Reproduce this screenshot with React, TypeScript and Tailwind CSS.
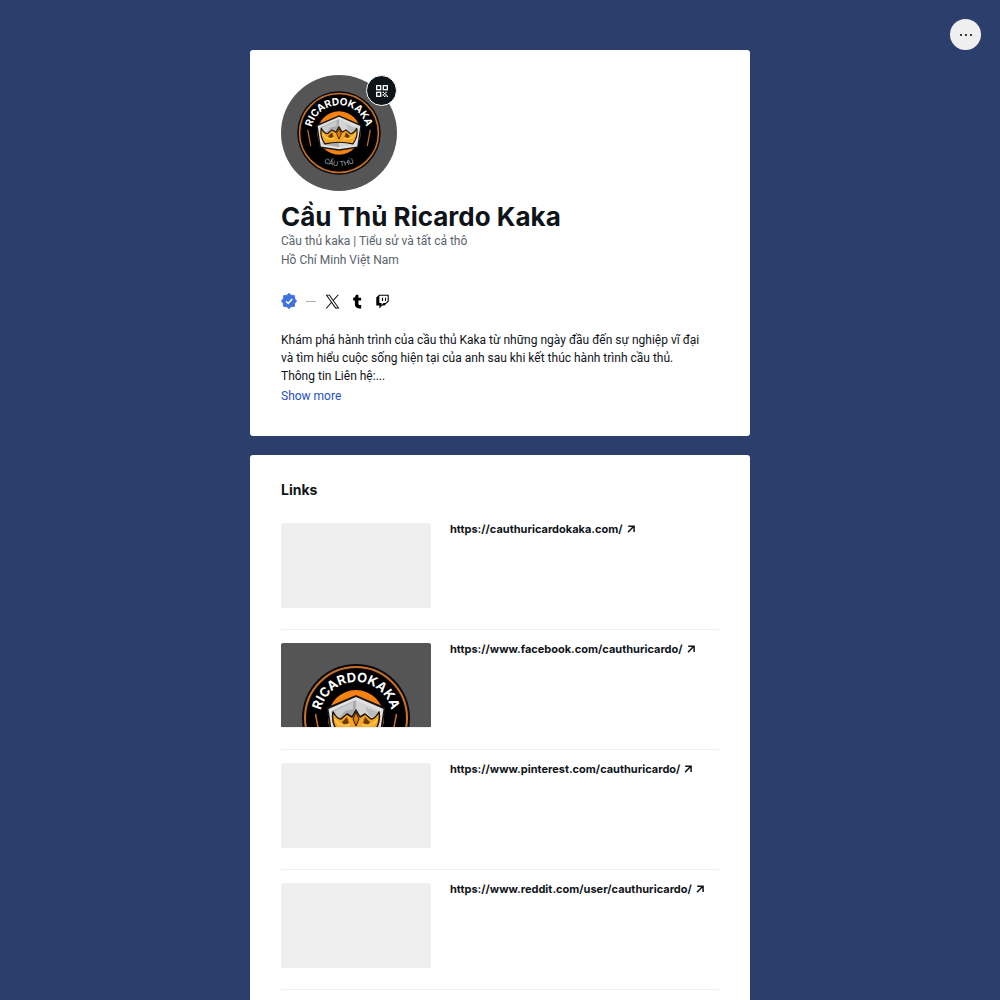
import { useId, useState } from "react";

interface LinkItem {
    url: string;
    hasThumbnail?: boolean;
}

const links: LinkItem[] = [
    { url: "https://cauthuricardokaka.com/" },
    { url: "https://www.facebook.com/cauthuricardo/", hasThumbnail: true },
    { url: "https://www.pinterest.com/cauthuricardo/" },
    { url: "https://www.reddit.com/user/cauthuricardo/" },
];

function TeamLogo({ className, cropped = false }: { className?: string; cropped?: boolean }) {
    const id = useId();

    return (
        <svg
            className={className}
            viewBox={cropped ? "0 0 150 84" : "0 0 150 150"}
            role="img"
            aria-label="Ricardo Kaka logo"
        >
            <rect width="150" height="150" fill="#555555" />
            <circle cx="75" cy="75" r="54" fill="#080808" />
            <circle cx="75" cy="75" r="51" fill="none" stroke="#c9702a" strokeWidth="2" />
            <circle cx="75" cy="75" r="48.5" fill="#000" />
            <circle cx="75" cy="75" r="28" fill="#f8820f" />

            {/* Ring lettering */}
            <path id={`${id}-top`} d="M39.700 82a36 36 0 1 1 70.600 0" fill="none" />
            <text fill="#fff" fontSize="13" fontWeight="700" textAnchor="middle">
                <textPath href={`#${id}-top`} startOffset="50%">RICARDOKAKA</textPath>
            </text>
            {!cropped && (
                <>
                    <path id={`${id}-bottom`} d="M32 75a43 43 0 0 0 86 0" fill="none" />
                    <text fill="#a5adb5" fontSize="9" textAnchor="middle">
                        <textPath href={`#${id}-bottom`} startOffset="50%">CẦU THỦ</textPath>
                    </text>
                </>
            )}
            <path d="M34.500 71 38.500 92M115.500 71 111.500 92" stroke="#c9702a" strokeWidth="1.500" />

            {/* Shield */}
            <path d="M75 52 45.500 64.500 50 94 75 98 100 94 104.500 64.500Z" fill="#161616" />
            <path d="M75 54 47.500 66 51.500 92.500 75 96 98.500 92.500 102.500 66Z" fill="#e2e2e2" />
            <path d="M75 57 50.500 68 54 90 75 93Z" fill="#a9abad" />
            <path d="M75 57 99.500 68 96 90 75 93Z" fill="#d3d4d5" />
            <path d="M72 59 53 68 57 76 64 68 72 66Z" fill="#c9cbcd" />
            <path d="M84 64 97 69 95 77 88 72Z" fill="#babcbe" />

            {/* Crown */}
            <path
                d="M52 69Q56 76 60 76L66 71 71 74 75 67 79 74 84 71 90 76Q94 76 98 69 100 80 93 89 75 85 57 89 50 80 52 69Z"
                fill="#f5a623"
                stroke="#201303"
                strokeWidth="1.500"
                strokeLinejoin="round"
            />
            <path d="M61 79 66 74 68 80 63 82ZM89 79 84 74 82 80 87 82Z" fill="#6b3a08" />
            <path d="M54 76Q57 84 69 82M96 76Q93 84 81 82" fill="none" stroke="#ffc94d" strokeWidth="2" />
            <path d="M75 69 72 76 75 83 78 76Z" fill="#e27c09" stroke="#201303" strokeWidth="1" />
        </svg>
    );
}

function QrIcon() {
    return (
        <svg className="size-3" viewBox="0 0 12 12" fill="none" stroke="currentColor" strokeWidth="1.300">
            <rect x="0.700" y="0.700" width="4" height="4" />
            <rect x="7.300" y="0.700" width="4" height="4" />
            <rect x="0.700" y="7.300" width="4" height="4" />
            <path d="M6.600 7.300h1.400M9.400 7.300h1.300M8 8.700h1.400M6.600 10h1.400M9.400 10h1.300M10.700 11.300h1.300M8 11.300h1.400" />
        </svg>
    );
}

function VerifiedIcon() {
    return (
        <svg className="size-4" viewBox="0 0 16 16">
            <path
                d="M8 0.300 10 2.200 13.400 2.600 13.800 6 15.700 8 13.800 10 13.400 13.400 10 13.800 8 15.700 6 13.800 2.600 13.400 2.200 10 0.300 8 2.200 6 2.600 2.600 6 2.200Z"
                fill="#3f71df"
                stroke="#3f71df"
                strokeWidth="0.800"
                strokeLinejoin="round"
            />
            <path d="m5 8.300 2.200 2.200 4-4.600" fill="none" stroke="#fff" strokeWidth="1.500" />
        </svg>
    );
}

function XIcon() {
    return (
        <svg className="size-[15px]" viewBox="0 0 24 24" fill="currentColor">
            <path d="M14.095 10.316 22.286 1h-1.940L13.230 9.088 7.551 1H1l8.590 12.231L1 23h1.940l7.510-8.543L16.449 23H23l-8.905-12.684Zm-2.658 3.022-.872-1.218L3.640 2.432h2.980l5.590 7.821.869 1.219 7.265 10.166h-2.982l-5.926-8.300Z" />
        </svg>
    );
}

function TumblrIcon() {
    return (
        <svg className="size-[15px]" viewBox="0 0 24 24" fill="currentColor">
            <path d="M14.563 23c-3.800 0-6.780-1.850-6.780-6.480v-5.960H5V6.500c2.970-.750 4.270-3.210 4.410-5.300h4.100v4.800h4.300v4.360h-4.300v5.100c0 1.730.870 2.260 2.200 2.260h2.170V23h-3.317Z" />
        </svg>
    );
}

function TwitchIcon() {
    return (
        <svg className="size-[15px]" viewBox="0 0 24 24" fill="currentColor">
            <path d="M6.500 1 2 5.500v13h5V23l4.500-4.500H15L22 12V1H6.500Zm13.700 10.200-3.200 3.200h-3.500l-3 3v-3H7V2.800h13.200v8.400ZM17.700 6v5h-1.800V6h1.800Zm-4.800 0v5h-1.800V6h1.800Z" />
        </svg>
    );
}

function ArrowIcon() {
    return (
        <svg className="ml-1 inline size-2 align-baseline" viewBox="0 0 8 8" fill="none" stroke="currentColor" strokeWidth="1.500">
            <path d="M1 7.200 6.800 1.200M1.200 1.200h5.900v5.900" />
        </svg>
    );
}

export default function App() {
    const [expanded, setExpanded] = useState(false);

    return (
        <div className="min-h-screen bg-[#2c3e6b] px-4 pt-[50px] pb-[50px] font-[Inter,'Noto_Sans',sans-serif] text-[#0f1419]">
            <button
                type="button"
                aria-label="More options"
                className="fixed top-[19px] right-[19px] flex size-[31px] items-center justify-center gap-[3px] rounded-full bg-[#efefef]"
            >
                <span className="size-[2px] rounded-full bg-black" />
                <span className="size-[2px] rounded-full bg-black" />
                <span className="size-[2px] rounded-full bg-black" />
            </button>

            <main className="mx-auto flex max-w-[500px] flex-col gap-[19px]">
                <section className="rounded-[3px] bg-white px-[31px] pt-[25px] pb-[30px]">
                    <div className="relative w-[116px]">
                        <TeamLogo className="size-[116px] rounded-full" />
                        <button
                            type="button"
                            aria-label="Show QR code"
                            className="absolute top-0 right-0 flex size-[31px] items-center justify-center rounded-full border border-white bg-[#0f1419] text-white"
                        >
                            <QrIcon />
                        </button>
                    </div>

                    <h1 className="mt-[10px] text-[26px] leading-[31px] font-bold">Cầu Thủ Ricardo Kaka</h1>
                    <p className="font-[Roboto,'Noto_Sans',sans-serif] text-[12px] leading-[19px] text-[#59626b]">
                        Cầu thủ kaka | Tiểu sử và tất cả thô
                        <br />
                        Hồ Chí Minh Việt Nam
                    </p>

                    <div className="mt-[23px] flex items-center">
                        <VerifiedIcon />
                        <span className="mx-[9px] h-px w-[10px] bg-[#a9adb1]" />
                        <div className="flex gap-[10px] text-black">
                            <a href="#x" aria-label="X"><XIcon /></a>
                            <a href="#tumblr" aria-label="Tumblr"><TumblrIcon /></a>
                            <a href="#twitch" aria-label="Twitch"><TwitchIcon /></a>
                        </div>
                    </div>

                    <p className="mt-[22px] font-[Roboto,'Noto_Sans',sans-serif] text-[12px] leading-[18px]">
                        Khám phá hành trình của cầu thủ Kaka từ những ngày đầu đến sự nghiệp vĩ đại
                        <br />
                        và tìm hiểu cuộc sống hiện tại của anh sau khi kết thúc hành trình cầu thủ.
                        <br />
                        Thông tin Liên hệ:...
                    </p>
                    <button
                        type="button"
                        aria-expanded={expanded}
                        onClick={() => setExpanded(!expanded)}
                        className="mt-px block font-[Roboto,'Noto_Sans',sans-serif] text-[12px] leading-[20px] text-[#2350c4]"
                    >
                        Show more
                    </button>
                </section>

                <section className="rounded-[3px] bg-white px-[31px] pt-[25px] pb-[31px]">
                    <h2 className="text-[14px] leading-[20px] font-bold">Links</h2>
                    <ul className="mt-[10px]">
                        {links.map((link) => (
                            <li key={link.url} className="border-b border-[#efefef] pt-[13px] pb-[21px]">
                                <a href={link.url} className="flex gap-[19px]">
                                    <div className="h-[85px] w-[150px] shrink-0 overflow-hidden rounded-[2px] bg-[#efefef]">
                                        {link.hasThumbnail && <TeamLogo className="w-full" cropped />}
                                    </div>
                                    <span className="text-[11px] leading-[12px] font-bold">
                                        {link.url}
                                        <ArrowIcon />
                                    </span>
                                </a>
                            </li>
                        ))}
                    </ul>
                </section>
            </main>
        </div>
    );
}
